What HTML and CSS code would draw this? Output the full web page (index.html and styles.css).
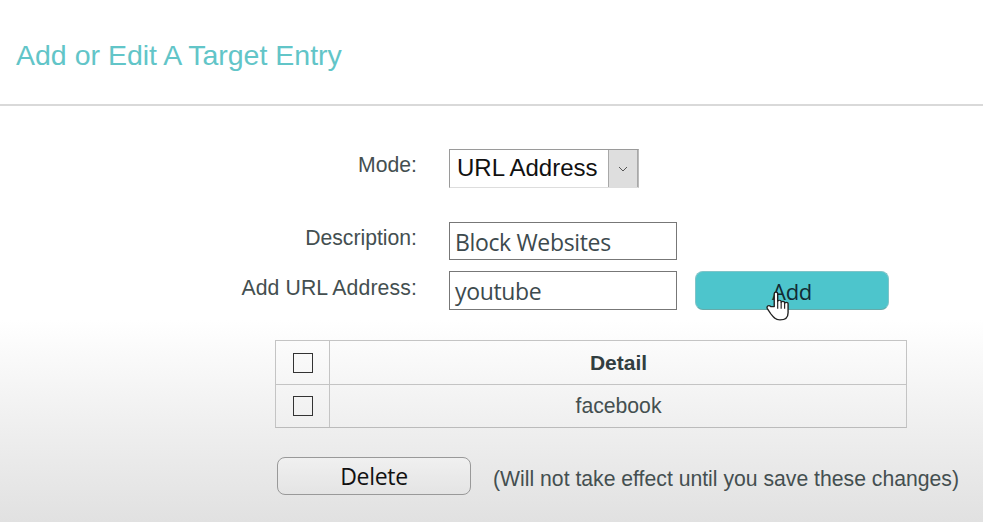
FILE: index.html
```html
<!DOCTYPE html>
<html lang="en">
<head>
<meta charset="utf-8">
<title>Add or Edit A Target Entry</title>
<link rel="stylesheet" href="styles.css">
</head>
<body>
<header class="head"><h1 class="title">Add or Edit A Target Entry</h1></header>
<main class="form">
  <div class="row row-mode">
    <label class="label">Mode:</label>
    <div class="select"><span class="select-text">URL Address</span><span class="select-btn"><svg width="10" height="6" viewBox="0 0 10 6"><path d="M1 1l4 4 4-4" fill="none" stroke="#555" stroke-width="1"/></svg></span></div>
  </div>
  <div class="row row-desc">
    <label class="label">Description:</label>
    <div class="input input-desc">Block Websites</div>
  </div>
  <div class="row row-url">
    <label class="label">Add URL Address:</label>
    <div class="input input-url">youtube</div>
    <div class="add-wrap">
      <button class="btn-add">Add</button>
      <svg class="cursor" width="30" height="33" viewBox="0 0 26 32" preserveAspectRatio="none"><path d="M8 18V5.500C8 3.500 11 3.500 11 5.500V13C11 11.500 14 11.500 14 13V14C14 12.500 17 12.500 17 14V15C17 13.500 20 13.500 20 15V24C20 28 18 31 13 31C9 31 7 28 5 25L2 20C1 18 3 16 5 18Z" fill="#fff" stroke="#222" stroke-width="1.200" stroke-linejoin="round"/><path d="M11 13v7M14 14v6M17 15v5" stroke="#222" stroke-width="1" fill="none"/></svg>
    </div>
  </div>
  <div class="table">
    <div class="cell cell-check"><span class="check"></span></div>
    <div class="cell cell-head">Detail</div>
    <div class="cell cell-check cell-low"><span class="check"></span></div>
    <div class="cell cell-body cell-low">facebook</div>
  </div>
  <div class="actions">
    <button class="btn-delete">Delete</button>
    <span class="note">(Will not take effect until you save these changes)</span>
  </div>
</main>
</body>
</html>
```
FILE: styles.css
```css
* { box-sizing: border-box; }
html, body { margin: 0; height: 522px; overflow: hidden; }
body {
  width: 983px;
  background: linear-gradient(#fff 0, #fff 320px, #f3f3f3 400px, #e1e1e1 522px);
  font-family: "Liberation Sans", Arial, sans-serif;
  color: #3e4a4c;
}
.head { height: 106px; border-bottom: 2px solid #d9d9d9; padding: 39px 0 0 16px; }
.title { margin: 0; font-weight: 400; font-size: 28.500px; line-height: 33px; color: #62c5c8; }
.form { display: flex; flex-direction: column; }
.row { display: flex; align-items: flex-start; }
.label { width: 417px; text-align: right; font-size: 21.200px; line-height: 24px; margin-right: 32px; color: #444f50; }
.row-mode { margin-top: 43px; }
.row-mode .label { padding-top: 4px; }
.select { width: 190px; height: 39px; display: flex; border: 1px solid #9a9a9a; border-bottom-color: #ddd; border-right-color: #bbb; background: #fff; }
.select-text { flex: 1; padding-left: 7px; font-size: 24px; line-height: 36px; color: #111; }
.select-btn { width: 30px; background: #dedede; border: 1px solid #a8a8a8; border-top: 0; border-bottom: 0; display: flex; align-items: center; justify-content: center; }
.row-desc { margin-top: 34px; }
.row-desc .label { padding-top: 4px; }
.input { width: 228px; border: 1px solid #777; background: #fff; padding-left: 5px; font-family: "Open Sans", sans-serif; font-size: 23px; letter-spacing: -0.350px; color: #3d4a4e; }
.input-desc { height: 38px; line-height: 38px; }
.row-url { margin-top: 11px; }
.row-url .label { padding-top: 5px; letter-spacing: 0.130px; }
.input-url { height: 39px; line-height: 39px; }
.add-wrap { position: relative; margin-left: 18px; }
.btn-add { display: block; width: 194px; height: 39px; padding: 0; border: 1px solid #7fc4c8; border-bottom-color: #6aa; border-radius: 8px; background: #4dc5cc; font-family: "Open Sans", sans-serif; font-size: 22px; letter-spacing: -0.300px; color: #122a33; }
.cursor { position: absolute; left: 70px; top: 17px; }
.table { display: grid; grid-template-columns: 54px 577px; width: 632px; margin: 30px 0 0 275px; border: 1px solid #c4c4c4; border-bottom-color: #bbb; }
.cell { display: flex; align-items: center; justify-content: center; height: 43px; }
.cell-low { height: 43px; border-top: 1px solid #c4c4c4; }
.cell-check { border-right: 1px solid #c4c4c4; }
.cell-head { font-weight: 700; font-size: 21px; color: #323e40; }
.cell-body { font-size: 21.200px; color: #444f50; }
.check { width: 20px; height: 20px; border: 1px solid #333; }
.actions { display: flex; align-items: center; margin: 29px 0 0 277px; }
.btn-delete { width: 194px; height: 38px; padding: 0; border: 1px solid #999; border-radius: 8px; background: linear-gradient(#f0f0f0, #e4e4e4); font-family: "Open Sans", sans-serif; font-size: 23px; letter-spacing: -0.300px; color: #111; }
.note { margin: 6px 0 0 22px; font-size: 21.200px; color: #444f50; }
```
